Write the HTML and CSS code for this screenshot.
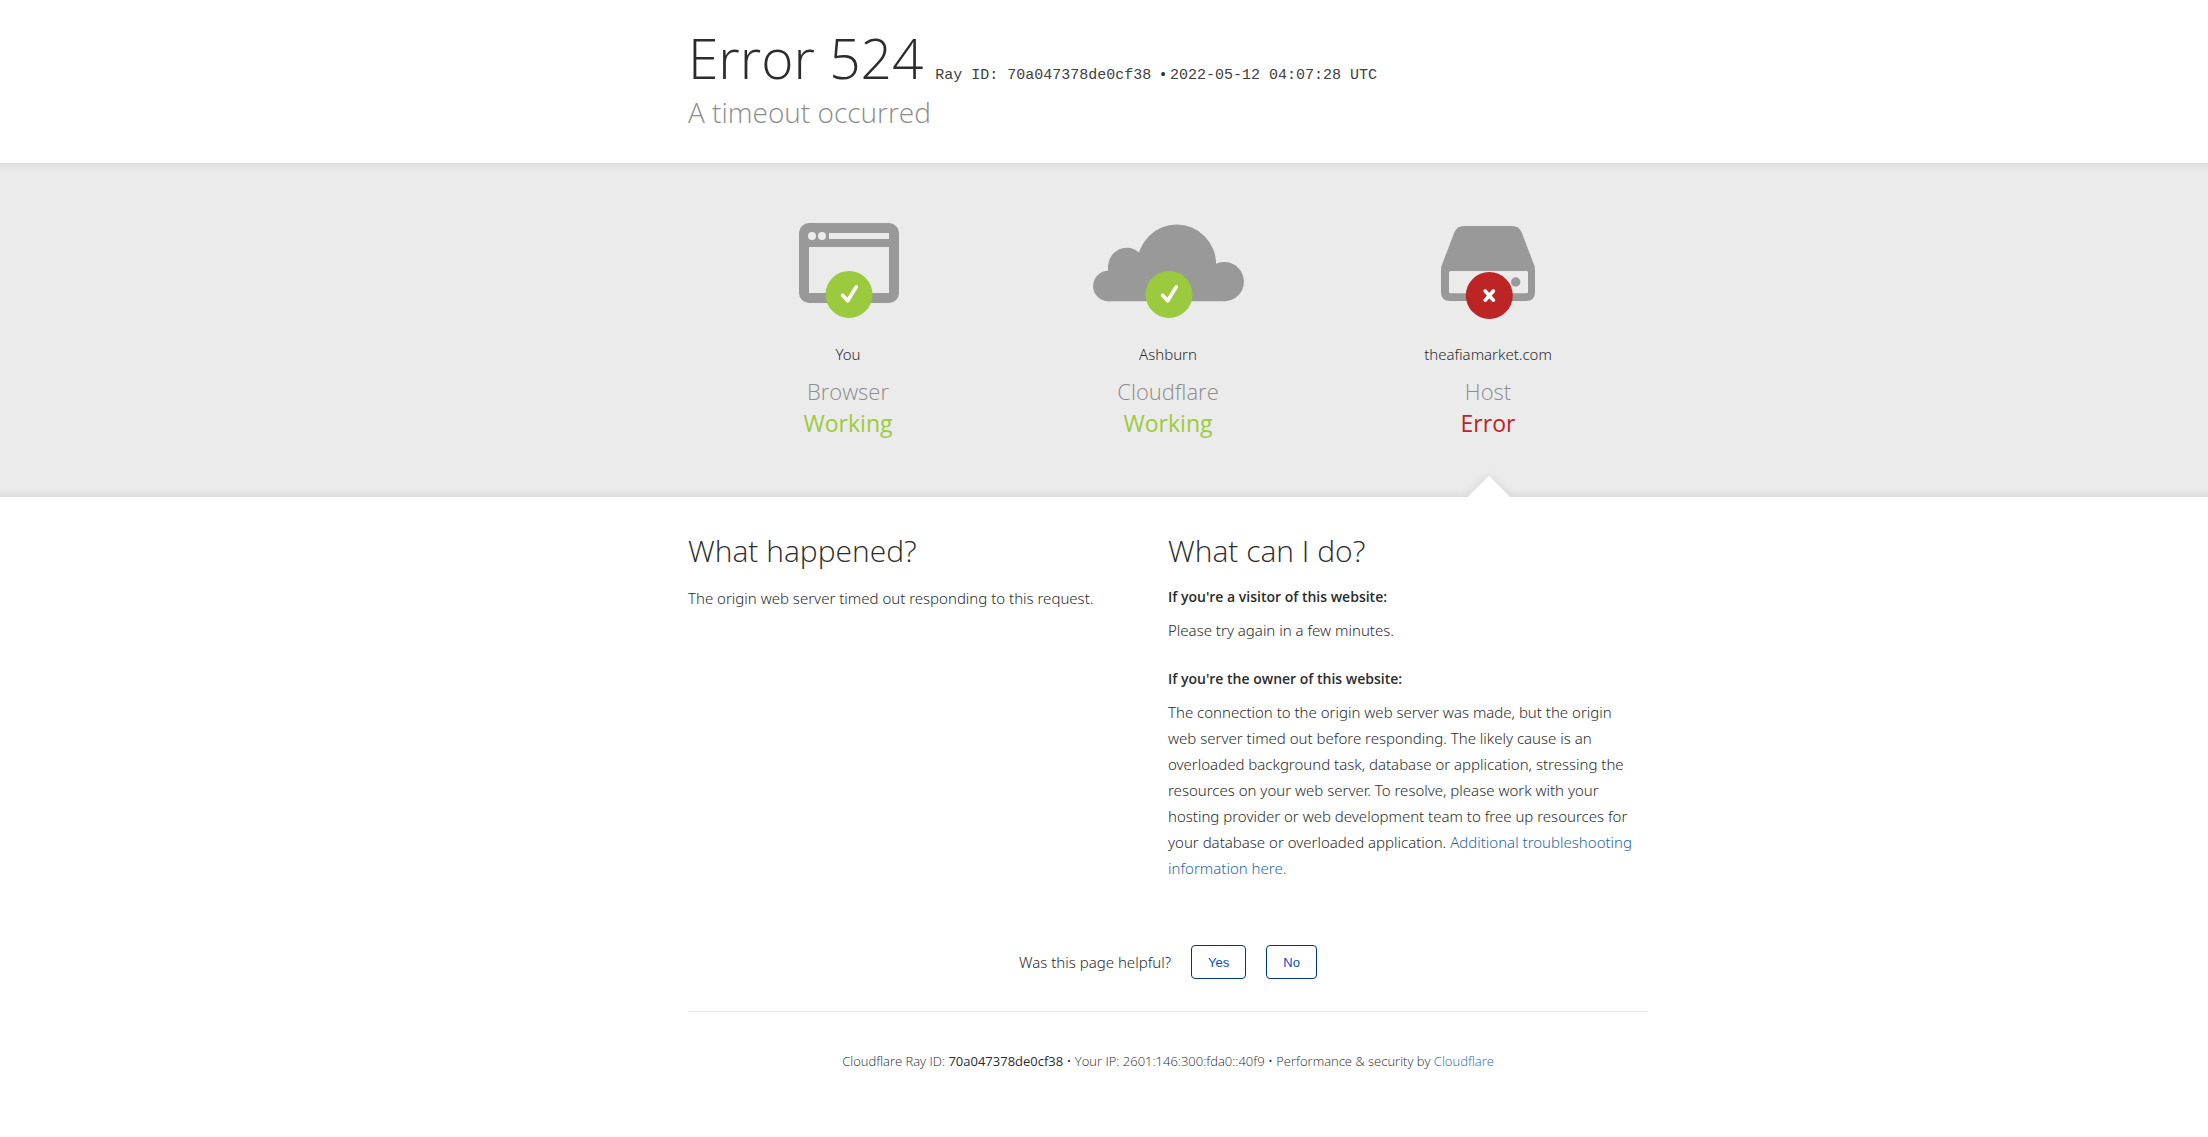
FILE: index.html
```
<!DOCTYPE html>
<html lang="en">
<head>
    <meta charset="UTF-8">
    <meta name="viewport" content="width=device-width, initial-scale=1.0">
    <title>theafiamarket.com | 524: A timeout occurred</title>
    <link rel="stylesheet" href="styles.css">
</head>
<body>

    <header class="band header">
        <div class="wrapper">
            <h1 class="title">
                <span class="error-code">Error 524</span>
                <span class="ray"><code>Ray ID: 70a047378de0cf38 </code>&bull; <code>2022-05-12 04:07:28 UTC</code></span>
            </h1>
            <h2 class="subtitle">A timeout occurred</h2>
        </div>
    </header>

    <section class="band status">
        <div class="wrapper status-grid">
            <div class="status-item">
                <svg class="status-icon" viewBox="0 0 160 110" aria-hidden="true">
                    <rect x="31" y="8" width="100" height="80" rx="10" fill="#999"/>
                    <circle cx="44" cy="21" r="4" fill="#ebebeb"/>
                    <circle cx="54" cy="21" r="4" fill="#ebebeb"/>
                    <path d="M61 18h60v6H61zM41 32h80v46H41z" fill="#ebebeb"/>
                    <circle cx="81" cy="79.5" r="23.5" fill="#9bca3e"/>
                    <path d="M74.5 80.2l5.2 5.6 8.6-14" fill="none" stroke="#fff" stroke-width="3.6" stroke-linecap="round" stroke-linejoin="round"/>
                </svg>
                <span class="name">You</span>
                <h3 class="kind">Browser</h3>
                <span class="state working">Working</span>
            </div>
            <div class="status-item">
                <svg class="status-icon" viewBox="0 0 160 110" aria-hidden="true">
                    <g fill="#999">
                        <circle cx="20.4" cy="71" r="15.3"/>
                        <circle cx="38.8" cy="51.4" r="18.6"/>
                        <circle cx="88.7" cy="49" r="39.4"/>
                        <circle cx="136.3" cy="66.7" r="19.6"/>
                        <path d="M20 50h117v36.3H20z"/>
                    </g>
                    <circle cx="81" cy="79.5" r="23.5" fill="#9bca3e"/>
                    <path d="M74.5 80.2l5.2 5.6 8.6-14" fill="none" stroke="#fff" stroke-width="3.6" stroke-linecap="round" stroke-linejoin="round"/>
                </svg>
                <span class="name">Ashburn</span>
                <h3 class="kind">Cloudflare</h3>
                <span class="state working">Working</span>
            </div>
            <div class="status-item">
                <svg class="status-icon" viewBox="0 0 160 110" aria-hidden="true">
                    <path d="M56 11h48q7 0 9.5 6l13 34q.5 2 .5 4v22q0 9-9 9H42q-9 0-9-9V55q0-2 .5-4l13-34q2.5-6 9.5-6z" fill="#999"/>
                    <rect x="41" y="56" width="79" height="22.3" rx="1.5" fill="#ebebeb"/>
                    <circle cx="107.7" cy="67" r="4.7" fill="#999"/>
                    <circle cx="81.3" cy="80.5" r="23.5" fill="#bd2426"/>
                    <path d="M77.2 76l8.2 9.2M85.4 76l-8.2 9.2" fill="none" stroke="#fff" stroke-width="3.6" stroke-linecap="round"/>
                </svg>
                <span class="name">theafiamarket.com</span>
                <h3 class="kind">Host</h3>
                <span class="state failed">Error</span>
                <span class="notch"></span>
            </div>
        </div>
    </section>

    <main class="band">
        <div class="wrapper">
            <div class="columns">
                <div class="column">
                    <h2 class="heading">What happened?</h2>
                    <p>The origin web server timed out responding to this request.</p>
                </div>
                <div class="column">
                    <h2 class="heading">What can I do?</h2>
                    <h3 class="audience">If you're a visitor of this website:</h3>
                    <p>Please try again in a few minutes.</p>
                    <h3 class="audience">If you're the owner of this website:</h3>
                    <p>The connection to the origin web server was made, but the origin web server timed out before responding. The likely cause is an overloaded background task, database or application, stressing the resources on your web server. To resolve, please work with your hosting provider or web development team to free up resources for your database or overloaded application. <a href="#">Additional troubleshooting information here.</a></p>
                </div>
            </div>

            <div class="feedback">
                <span>Was this page helpful?</span>
                <button type="button" class="feedback-btn">Yes</button>
                <button type="button" class="feedback-btn">No</button>
            </div>

            <footer class="footer">
                Cloudflare Ray ID: <strong>70a047378de0cf38</strong> &bull;
                Your IP: 2601:146:300:fda0::40f9 &bull;
                Performance &amp; security by <a href="#">Cloudflare</a>
            </footer>
        </div>
    </main>

</body>
</html>
```
FILE: styles.css
```
* {
    box-sizing: border-box;
}
body {
    margin: 0;
    background-color: #fff;
    color: #2c2c2c;
    font-family: "Noto Sans", "Open Sans", sans-serif;
    font-size: 15px;
    font-weight: 300;
    line-height: 26px;
}
h1, h2, h3, p {
    margin: 0;
    font-weight: 300;
}
a {
    color: #1f67a6;
    text-decoration: none;
}
.band {
    padding-left: 128px;
}
.wrapper {
    max-width: 960px;
    margin: 0 auto;
}
.header {
    padding-top: 22px;
    padding-bottom: 32px;
    font-family: "Open Sans", sans-serif;
}
.title {
    display: flex;
    align-items: baseline;
    gap: 12px;
}
.error-code {
    font-size: 55px;
    line-height: 72px;
}
.ray {
    font-size: 15px;
    font-weight: 600;
    line-height: 20px;
}
.ray code {
    color: #404040;
    font-family: "Liberation Mono", monospace;
    font-weight: 400;
    white-space: pre;
}
.subtitle {
    color: #8c8c8c;
    font-size: 28px;
    line-height: 37px;
}
.status {
    padding-top: 52px;
    background-color: #ebebeb;
    background-image:
        linear-gradient(to bottom, #dedede, #ebebeb),
        linear-gradient(to top, #dedede, #ebebeb);
    background-position: top, bottom;
    background-repeat: no-repeat;
    background-size: 100% 9px;
}
.status-grid {
    display: grid;
    grid-template-columns: repeat(3, 1fr);
}
.status-item {
    display: flex;
    flex-direction: column;
    align-items: center;
    position: relative;
    padding-bottom: 58px;
}
.status-icon {
    width: 160px;
    height: 110px;
    margin-bottom: 16px;
}
.kind {
    margin-top: 8px;
    color: #8c8c8c;
    font-family: "Open Sans", sans-serif;
    font-size: 22px;
    line-height: 32px;
}
.state {
    font-family: "Open Sans", sans-serif;
    font-size: 23px;
    font-weight: 400;
    line-height: 32px;
}
.working {
    color: #9bca3e;
}
.failed {
    color: #bd2426;
}
/* notch pointing at the failing host */
.notch {
    position: absolute;
    bottom: 0;
    left: 50%;
    width: 64px;
    height: 30px;
    margin-left: -31px;
    overflow: hidden;
}
.notch::after {
    content: "";
    position: absolute;
    top: 15px;
    left: 17px;
    width: 30px;
    height: 30px;
    background-color: #fff;
    box-shadow: 0 0 8px #d4d4d4;
    transform: rotate(45deg);
}
.columns {
    display: grid;
    grid-template-columns: 1fr 1fr;
    padding-top: 34px;
}
.column {
    padding-right: 8px;
}
.heading {
    margin-bottom: 14px;
    font-family: "Open Sans", sans-serif;
    font-size: 30px;
    line-height: 40px;
}
.audience {
    margin-bottom: 8px;
    font-family: "Open Sans", sans-serif;
    font-size: 14px;
    font-weight: 600;
    line-height: 24px;
}
p + .audience {
    margin-top: 24px;
}
.feedback {
    display: flex;
    align-items: center;
    justify-content: center;
    gap: 20px;
    padding: 64px 0 32px;
}
.feedback-btn {
    height: 34px;
    padding: 0 16px;
    border: 1px solid #003681;
    border-radius: 4px;
    background-color: #fff;
    color: #0051c3;
    font-family: "Liberation Sans", sans-serif;
    font-size: 13px;
    font-weight: 400;
}
.footer {
    padding: 36px 0;
    border-top: 1px solid #ebebeb;
    font-family: "Open Sans", sans-serif;
    font-size: 13px;
    text-align: center;
}
.footer strong {
    font-weight: 400;
}
```
